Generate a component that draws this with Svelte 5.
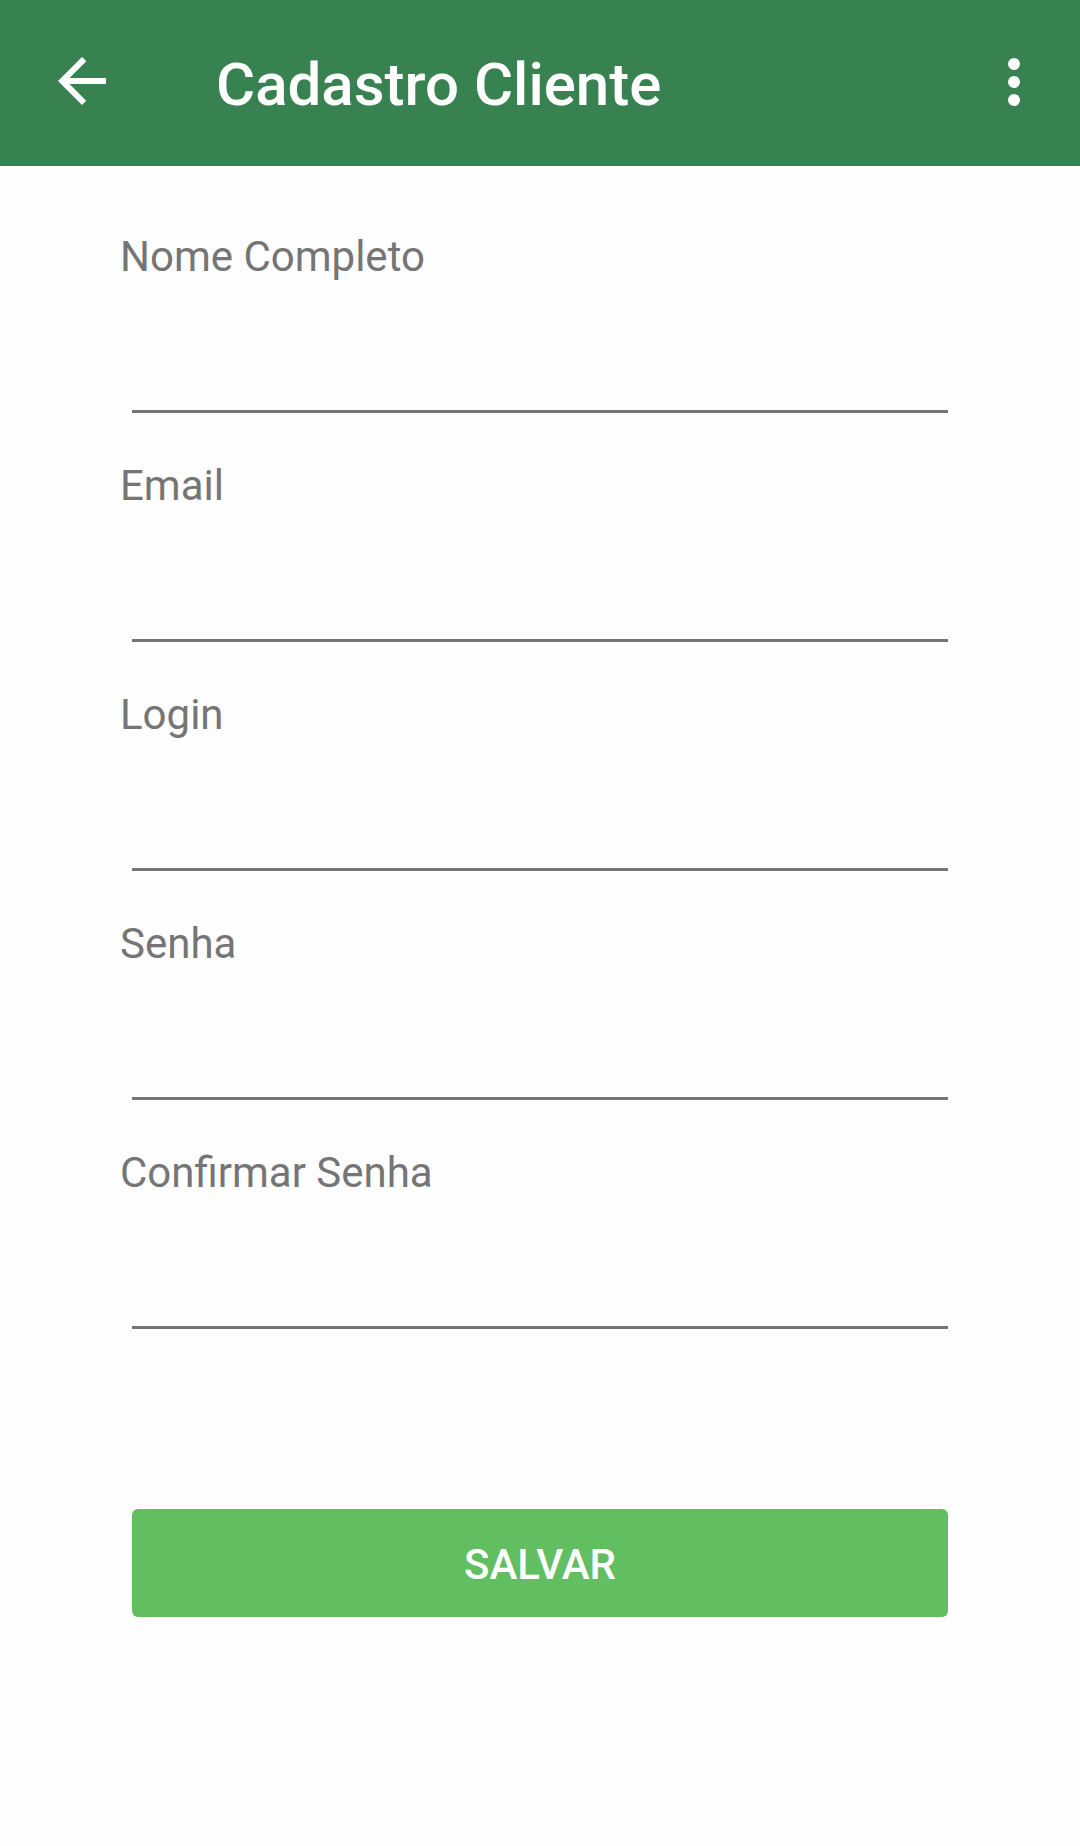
<script>
  let fields = $state([
    { id: 'nome', label: 'Nome Completo', type: 'text', autocomplete: 'name', value: '' },
    { id: 'email', label: 'Email', type: 'email', autocomplete: 'email', value: '' },
    { id: 'login', label: 'Login', type: 'text', autocomplete: 'username', value: '' },
    { id: 'senha', label: 'Senha', type: 'password', autocomplete: 'new-password', value: '' },
    { id: 'confirmar', label: 'Confirmar Senha', type: 'password', autocomplete: 'new-password', value: '' }
  ]);

  function save(event) {
    event.preventDefault();
  }
</script>

<header class="app-bar">
  <button class="icon-button" type="button" aria-label="Voltar">
    <svg viewBox="0 0 72 72" aria-hidden="true">
      <path d="M60 33H23.5l16.8-16.8L36 12 12 36l24 24 4.2-4.2L23.5 39H60z" />
    </svg>
  </button>
  <h1 class="title">Cadastro Cliente</h1>
  <button class="icon-button" type="button" aria-label="Mais opções">
    <svg viewBox="0 0 72 72" aria-hidden="true">
      <circle cx="36" cy="19" r="6" />
      <circle cx="36" cy="37" r="6" />
      <circle cx="36" cy="55" r="6" />
    </svg>
  </button>
</header>

<main>
  <form class="form" onsubmit={save}>
    {#each fields as field (field.id)}
      <div class="field">
        <label for={field.id}>{field.label}</label>
        <input id={field.id} type={field.type} autocomplete={field.autocomplete} bind:value={field.value} />
      </div>
    {/each}
    <button class="save" type="submit">SALVAR</button>
  </form>
</main>

<style>
  :global(body) {
    margin: 0;
    background: #fefefe;
    font-family: Roboto, 'Liberation Sans', sans-serif;
  }

  .app-bar {
    display: flex;
    align-items: flex-start;
    padding: 45px 30px 41px 46px;
    background: #378250;
    color: #fff;
  }

  .icon-button {
    flex: none;
    width: 72px;
    height: 72px;
    padding: 0;
    border: 0;
    background: none;
    color: inherit;
    cursor: pointer;
  }

  .icon-button svg {
    display: block;
    width: 72px;
    height: 72px;
    fill: currentColor;
  }

  .title {
    flex: 1;
    min-width: 0;
    margin: 0 0 0 98px;
    font-size: 60px;
    font-weight: 500;
    line-height: 80px;
  }

  .form {
    display: flex;
    flex-direction: column;
    gap: 48px;
    padding: 66px 120px;
  }

  .field {
    display: flex;
    flex-direction: column;
  }

  label {
    color: #757575;
    font-size: 42px;
    line-height: 50px;
  }

  input {
    box-sizing: border-box;
    height: 131px;
    min-width: 0;
    margin: 0 12px;
    padding: 48px 0 12px;
    border: 0;
    border-bottom: 3px solid #757575;
    border-radius: 0;
    outline: 0;
    background: transparent;
    color: #212121;
    font: inherit;
    font-size: 48px;
  }

  input:focus {
    border-bottom-color: #378250;
  }

  .save {
    height: 108px;
    margin: 132px 12px 0;
    padding: 4px 24px 0;
    border: 0;
    border-radius: 6px;
    background: #61be61;
    color: #fff;
    font-family: inherit;
    font-size: 42px;
    font-weight: 500;
    line-height: 50px;
    cursor: pointer;
  }
</style>
